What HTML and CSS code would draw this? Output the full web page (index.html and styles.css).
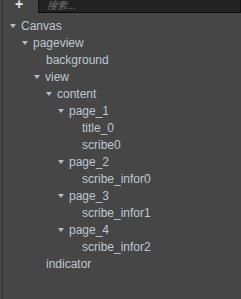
FILE: index.html
```html
<!DOCTYPE html>
<html lang="en">
<head>
    <meta charset="UTF-8">
    <title>Hierarchy</title>
    <link rel="stylesheet" href="styles.css">
</head>
<body>
    <div class="panel">
        <div class="toolbar">
            <span class="add">+</span>
            <div class="search">搜索...</div>
        </div>
        <ul class="tree">
            <li><div class="row open"><i class="arrow"></i>Canvas</div>
                <ul>
                    <li><div class="row open"><i class="arrow"></i>pageview</div>
                        <ul>
                            <li><div class="row leaf">background</div></li>
                            <li><div class="row open"><i class="arrow"></i>view</div>
                                <ul>
                                    <li><div class="row open"><i class="arrow"></i>content</div>
                                        <ul>
                                            <li><div class="row open"><i class="arrow"></i>page_1</div>
                                                <ul>
                                                    <li><div class="row leaf">title_0</div></li>
                                                    <li><div class="row leaf">scribe0</div></li>
                                                </ul>
                                            </li>
                                            <li><div class="row open"><i class="arrow"></i>page_2</div>
                                                <ul>
                                                    <li><div class="row leaf">scribe_infor0</div></li>
                                                </ul>
                                            </li>
                                            <li><div class="row open"><i class="arrow"></i>page_3</div>
                                                <ul>
                                                    <li><div class="row leaf">scribe_infor1</div></li>
                                                </ul>
                                            </li>
                                            <li><div class="row open"><i class="arrow"></i>page_4</div>
                                                <ul>
                                                    <li><div class="row leaf">scribe_infor2</div></li>
                                                </ul>
                                            </li>
                                        </ul>
                                    </li>
                                </ul>
                            </li>
                            <li><div class="row leaf">indicator</div></li>
                        </ul>
                    </li>
                </ul>
            </li>
        </ul>
    </div>
</body>
</html>
```

FILE: styles.css
```css
html, body{
    margin: 0;
    padding: 0;
    background: #464646;
}

.panel{
    height: 299px;
    background: #464646;
    border-left: 1px solid #303030;
    margin-left: 2px;
    font-family: "Liberation Sans", Arial, sans-serif;
    font-size: 12px;
    color: #bfc7d2;
    overflow: hidden;
}

.toolbar{
    display: flex;
    height: 13px;
}
.add{
    width: 35px;
    padding-left: 12px;
    box-sizing: border-box;
    color: #e6e6e6;
    font-size: 14px;
    font-weight: bold;
    line-height: 8px;
}
.search{
    flex: 1;
    background: #222;
    border: 1px solid #151515;
    border-top: none;
    border-bottom: 1px solid #0c0c0c;
    color: #707070;
    font-family: "Noto Sans CJK SC", sans-serif;
    font-size: 10px;
    font-style: italic;
    line-height: 10px;
    padding-left: 8px;
    overflow: hidden;
}

.tree{
    margin: 5px 0 0 7px;
}
.tree, .tree ul{
    list-style: none;
    padding: 0;
}
.tree ul{
    margin: 0;
    padding-left: 12px;
}
.row{
    height: 17px;
    line-height: 17px;
    white-space: nowrap;
}
.leaf{
    padding-left: 12px;
}
.arrow{
    display: inline-block;
    width: 0;
    height: 0;
    border-left: 3.5px solid transparent;
    border-right: 3.5px solid transparent;
    border-top: 4px solid #b4bcc8;
    margin-right: 5px;
    vertical-align: 2px;
}
```
